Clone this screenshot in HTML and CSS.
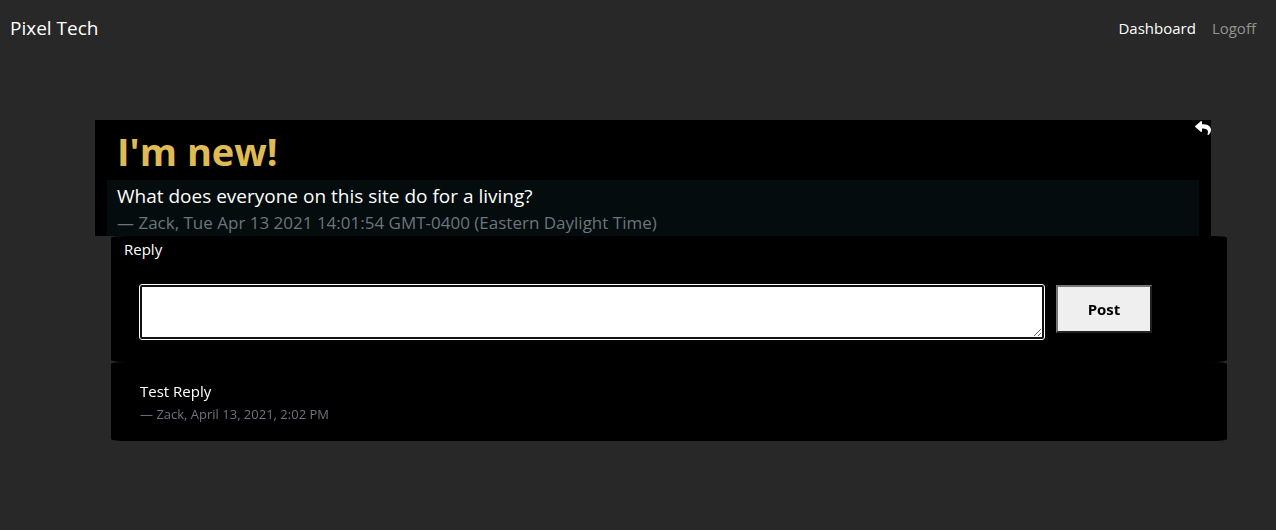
FILE: index.html
```html
<!DOCTYPE html>
<html lang="en">
<head>
<meta charset="utf-8">
<meta name="viewport" content="width=device-width, initial-scale=1">
<title>Pixel Tech</title>
<link rel="stylesheet" href="styles.css">
</head>
<body>
<header class="navbar">
  <a class="brand" href="#">Pixel Tech</a>
  <nav class="nav-links">
    <a class="nav-link active" href="#">Dashboard</a>
    <a class="nav-link" href="#">Logoff</a>
  </nav>
</header>
<main class="thread">
  <article class="post">
    <button class="reply-toggle" type="button" aria-label="Reply to post">
      <svg class="reply-icon" viewBox="0 0 512 512" aria-hidden="true"><path fill="currentColor" d="M8.309 189.836L184.313 37.851C199.719 24.546 224 35.347 224 56.015v80.053c160.629 1.839 288 34.032 288 186.258 0 61.441-39.581 122.309-83.333 154.132-13.653 9.931-33.111-2.533-28.077-18.631 45.344-145.012-21.507-183.51-176.59-185.742V360c0 20.7-24.3 31.453-39.687 18.164l-176.004-152c-11.071-9.562-11.086-26.753 0-36.328z"/></svg>
    </button>
    <h1 class="post-title">I'm new!</h1>
    <div class="post-body">
      <p class="post-text">What does everyone on this site do for a living?</p>
      <p class="post-meta">— Zack, Tue Apr 13 2021 14:01:54 GMT-0400 (Eastern Daylight Time)</p>
    </div>
  </article>
  <section class="replies">
    <form class="panel reply-form">
      <label class="reply-label" for="reply">Reply</label>
      <div class="reply-row">
        <textarea class="reply-input" id="reply" autofocus></textarea>
        <button class="post-button" type="button">Post</button>
      </div>
    </form>
    <article class="panel reply">
      <p class="reply-text">Test Reply</p>
      <p class="reply-meta">— Zack, April 13, 2021, 2:02 PM</p>
    </article>
  </section>
</main>
</body>
</html>
```
FILE: styles.css
```css
* {
  box-sizing: border-box;
}

body {
  margin: 0;
  min-height: 100vh;
  background: #282828;
  color: #fff;
  font-family: "Segoe UI", "Open Sans", "Noto Sans", sans-serif;
  font-size: 15px;
  line-height: 24px;
}

h1,
p {
  margin: 0;
}

a {
  color: inherit;
  text-decoration: none;
}

.navbar {
  display: flex;
  align-items: center;
  justify-content: space-between;
  padding: 14px 20px 14px 10px;
}

.brand {
  font-size: 19px;
  line-height: 28px;
}

.nav-links {
  display: flex;
  gap: 16px;
}

.nav-link {
  color: #939393;
}

.nav-link.active {
  color: #fff;
}

.thread {
  padding: 64px 65px 0 95px;
}

.post {
  position: relative;
  padding: 8px 12px 0;
  background: #000;
}

.reply-toggle {
  position: absolute;
  top: 0;
  right: 0;
  display: flex;
  padding: 0;
  border: 0;
  background: none;
  color: #fff;
}

.reply-icon {
  width: 16px;
  height: 16px;
}

.post-title {
  padding: 0 10px 6px;
  color: #dfbb55;
  font-size: 38px;
  font-weight: 700;
  line-height: 46px;
}

.post-body {
  padding: 2px 10px 0;
  background: #040c0d;
}

.post-text {
  font-size: 19px;
  line-height: 28px;
}

.post-meta {
  color: #6c757d;
  font-size: 17px;
  line-height: 26px;
}

.replies {
  margin: 0 -16px 0 16px;
}

.panel {
  background: #000;
  border-radius: 16px / 2px;
}

.reply-form {
  padding: 1px 13px 23px;
}

.reply-label {
  display: block;
}

.reply-row {
  display: flex;
  align-items: flex-start;
  gap: 12px;
  padding: 24px 62px 0 16px;
}

.reply-input {
  flex: 1;
  min-width: 0;
  height: 54px;
  padding: 2px;
  border: 2px solid #101010;
  outline: 1px solid #fff;
  border-radius: 2px;
  background: #fff;
  color: #000;
  font: inherit;
}

.post-button {
  width: 96px;
  height: 48px;
  border: 2px solid;
  border-color: #767676 #212121 #212121 #767676;
  background: #efefef;
  color: #000;
  font: inherit;
  font-weight: 700;
}

.reply {
  padding: 17px 29px 16px;
}

.reply-meta {
  color: #6c757d;
  font-size: 13px;
  line-height: 22px;
}
```
